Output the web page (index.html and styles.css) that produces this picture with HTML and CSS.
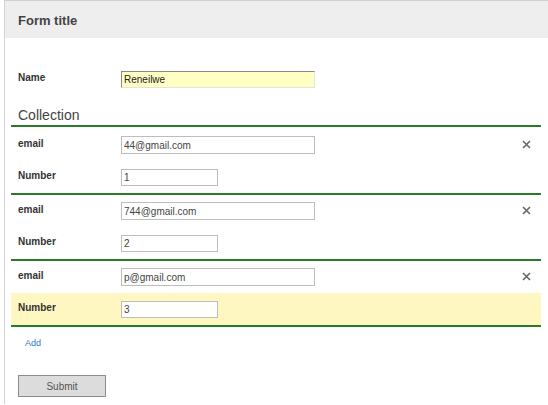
FILE: index.html
```html
<!DOCTYPE html>
<html>
<head>
<meta charset="utf-8">
<link rel="stylesheet" href="styles.css">
</head>
<body>
<div class="page">
  <div class="header">Form title</div>
  <div class="content">
    <div class="row name-row">
      <label class="label">Name</label>
      <input class="input wide yellow" type="text" value="Reneilwe">
    </div>
    <div class="collection-title">Collection</div>
    <div class="collection">
      <div class="item first">
        <div class="row">
          <label class="label">email</label>
          <input class="input wide" type="text" value="44@gmail.com">
          <span class="remove"><svg width="9" height="9" viewBox="0 0 9 9"><path d="M1 1L8 8M8 1L1 8" stroke="#666" stroke-width="1.6"/></svg></span>
        </div>
        <div class="row">
          <label class="label">Number</label>
          <input class="input narrow" type="text" value="1">
        </div>
      </div>
      <div class="item">
        <div class="row">
          <label class="label">email</label>
          <input class="input wide" type="text" value="744@gmail.com">
          <span class="remove"><svg width="9" height="9" viewBox="0 0 9 9"><path d="M1 1L8 8M8 1L1 8" stroke="#666" stroke-width="1.6"/></svg></span>
        </div>
        <div class="row">
          <label class="label">Number</label>
          <input class="input narrow" type="text" value="2">
        </div>
      </div>
      <div class="item">
        <div class="row">
          <label class="label">email</label>
          <input class="input wide" type="text" value="p@gmail.com">
          <span class="remove"><svg width="9" height="9" viewBox="0 0 9 9"><path d="M1 1L8 8M8 1L1 8" stroke="#666" stroke-width="1.6"/></svg></span>
        </div>
        <div class="row highlight">
          <label class="label">Number</label>
          <input class="input narrow" type="text" value="3">
        </div>
      </div>
    </div>
    <a class="add" href="#">Add</a>
    <button class="submit" type="button">Submit</button>
  </div>
</div>
</body>
</html>
```
FILE: styles.css
```css
html, body {
  margin: 0;
  padding: 0;
  background: #fff;
  font-family: "Liberation Sans", Arial, sans-serif;
}
.page {
  margin-left: 4px;
  border-left: 1px solid #d4d4d4;
  border-top: 1px solid #cfcfcf;
  min-height: 404px;
  box-sizing: border-box;
}
.header {
  height: 37px;
  background: #eeeeee;
  padding-left: 13px;
  padding-top: 1px;
  box-sizing: border-box;
  display: flex;
  align-items: center;
  font-weight: bold;
  font-size: 13px;
  color: #444;
}
.content {
  padding: 25px 7px 0 6px;
}
.row {
  display: flex;
  align-items: center;
  height: 32px;
  padding-left: 7px;
  padding-right: 10px;
}
.label {
  width: 103px;
  flex: none;
  font-weight: bold;
  font-size: 10px;
  color: #333;
  margin-top: -4px;
}
.input {
  box-sizing: border-box;
  height: 18px;
  border: 1px solid #bdbdbd;
  font-family: "Liberation Sans", Arial, sans-serif;
  font-size: 10px;
  color: #444;
  padding: 0 2px;
  margin: 0;
  outline: none;
  background: #fff;
}
.wide { width: 194px; }
.narrow { width: 97px; height: 17px; }
.yellow {
  background: #ffffc4;
  border-top: 1px solid #8a8a8a;
  border-left: 1px solid #8a8a8a;
  border-right: 1px solid #e2e2e2;
  border-bottom: 1px solid #e2e2e2;
  height: 17px;
  color: #222;
}
.collection-title {
  font-size: 14px;
  color: #444;
  padding-left: 7px;
  margin-top: 11px;
  height: 19px;
  line-height: 19px;
}
.collection {
  border-top: 2px solid #2a7a2a;
}
.item {
  border-bottom: 2px solid #2a7a2a;
}
.item.first {
  padding-top: 2px;
}
.remove {
  margin-left: auto;
  display: flex;
  align-items: center;
  margin-top: -2px;
}
.highlight {
  background: #fff7c2;
}
.add {
  display: block;
  margin: 11px 0 0 14px;
  font-size: 9px;
  color: #2f7bc4;
  text-decoration: none;
}
.submit {
  display: block;
  margin: 27px 0 0 7px;
  width: 88px;
  height: 22px;
  background: #dcdcdc;
  border: 1px solid #8c8c8c;
  font-family: "Liberation Sans", Arial, sans-serif;
  font-size: 10px;
  color: #555;
  padding: 0;
}
```
